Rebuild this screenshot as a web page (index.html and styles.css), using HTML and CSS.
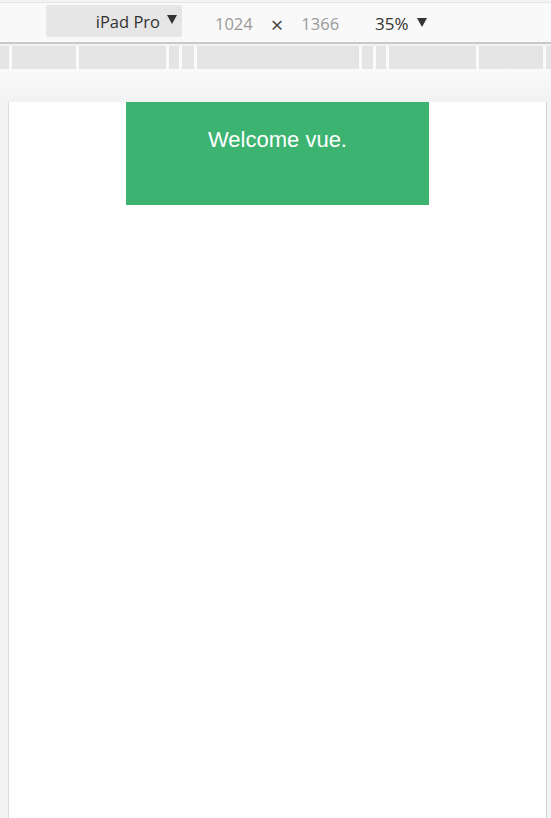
FILE: index.html
```html
<!DOCTYPE html>
<html lang="en">
<head>
<meta charset="utf-8">
<title>Device preview</title>
<link rel="stylesheet" href="styles.css">
</head>
<body>
<div class="toolbar">
  <div class="device-btn"><span class="device-name">iPad Pro</span><svg class="caret" width="10" height="9" viewBox="0 0 10 9"><polygon points="0,0 10,0 5,9" fill="#333"/></svg></div>
  <span class="dim dim-first">1024</span>
  <span class="times">&times;</span>
  <span class="dim">1366</span>
  <span class="zoom">35%</span><svg class="caret zoom-caret" width="10" height="9" viewBox="0 0 10 9"><polygon points="0,0 10,0 5,9" fill="#333"/></svg>
</div>
<div class="ruler">
  <span class="seg" style="width:9px"></span>
  <span class="seg" style="width:64px"></span>
  <span class="seg" style="width:87px"></span>
  <span class="seg" style="width:10px"></span>
  <span class="seg" style="width:12px"></span>
  <span class="seg" style="width:162px"></span>
  <span class="seg" style="width:11px"></span>
  <span class="seg" style="width:10px"></span>
  <span class="seg" style="width:87px"></span>
  <span class="seg" style="width:64px"></span>
  <span class="seg seg-last"></span>
</div>
<div class="spacer"></div>
<div class="stage">
  <div class="page">
    <div class="hello">Welcome vue.</div>
  </div>
</div>
</body>
</html>
```
FILE: styles.css
```css
html, body {
  margin: 0;
  padding: 0;
  height: 100%;
  overflow: hidden;
}
body {
  background: #f3f3f3;
  font-family: "Open Sans", "Noto Sans", sans-serif;
}
.toolbar {
  height: 39px;
  margin-top: 2px;
  border-top: 1px solid #e6e6e6;
  border-bottom: 2px solid #c9c9c9;
  background: #f9f9f9;
  display: flex;
  align-items: center;
  box-sizing: content-box;
}
.device-btn {
  margin-left: 46px;
  width: 136px;
  height: 32px;
  margin-top: -4px;
  background: #e6e6e6;
  border-radius: 2px;
  display: flex;
  align-items: center;
  justify-content: flex-end;
  box-sizing: border-box;
  padding-right: 5px;
}
.device-name {
  font-size: 16.5px;
  color: #333;
  margin-top: 1px;
}
.caret {
  display: block;
  margin-left: 7px;
  margin-top: -3px;
  flex: none;
}
.dim {
  font-size: 16.5px;
  color: #999;
  margin-top: 1px;
}
.dim-first {
  margin-left: 33px;
}
.times {
  font-size: 22px;
  color: #444;
  margin: 3px 18px 0 18px;
}
.zoom {
  font-size: 17px;
  color: #333;
  margin-left: 36px;
  margin-top: 1px;
}
.zoom-caret {
  margin-left: 8px;
  margin-top: -1px;
}
.ruler {
  margin-top: 2px;
  height: 23px;
  display: flex;
  gap: 3px;
  background: #fafafa;
}
.seg {
  display: block;
  height: 23px;
  background: #e4e4e4;
  flex: none;
}
.seg-last {
  flex: 1;
}
.spacer {
  height: 33px;
  background: linear-gradient(#fafafa, #f2f2f2);
}
.stage {
  display: flex;
  padding-left: 8px;
  padding-right: 4px;
  height: calc(100% - 102px);
}
.page {
  flex: 1;
  background: #fff;
  border-left: 1px solid #dcdcdc;
  border-right: 1px solid #d6d6d6;
}
.hello {
  width: 303px;
  height: 103px;
  margin: 0 auto;
  box-sizing: border-box;
  padding-top: 25px;
  background: #3cb371;
  color: #fff;
  text-align: center;
  font-family: "Liberation Sans", Arial, sans-serif;
  font-size: 22px;
  line-height: 26px;
}
```
